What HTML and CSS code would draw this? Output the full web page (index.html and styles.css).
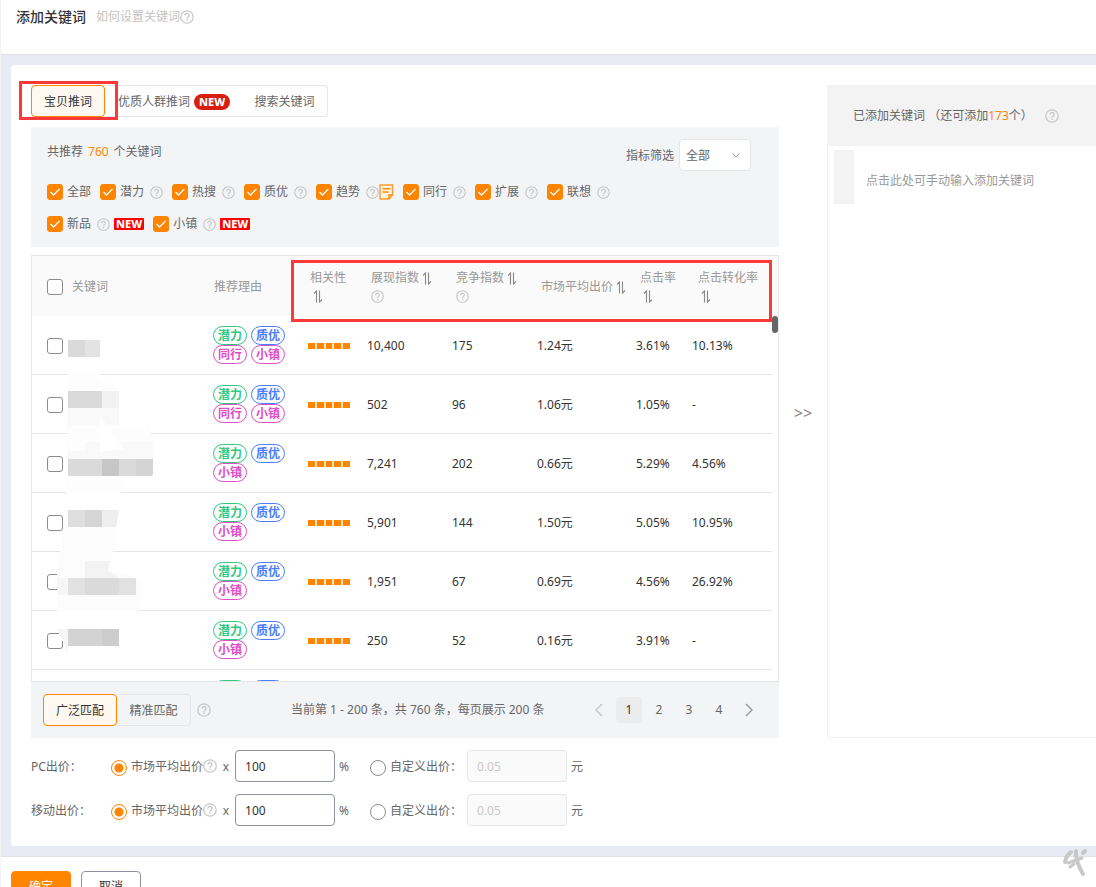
FILE: index.html
```html
<!DOCTYPE html>
<html lang="zh-CN">
<head>
<meta charset="utf-8">
<meta name="viewport" content="width=device-width, initial-scale=1">
<title>添加关键词</title>
<link rel="stylesheet" href="styles.css">
</head>
<body>
<svg class="defs" aria-hidden="true">
  <symbol id="help" viewBox="0 0 14 14">
    <circle cx="7" cy="7" r="6.2" fill="none" stroke="currentColor" stroke-width="1.3"/>
    <path d="M5 5.6a2 2 0 1 1 3.2 1.5c-.8.5-1.2.8-1.2 1.6" fill="none" stroke="currentColor" stroke-width="1.3"/>
    <rect x="6.3" y="9.5" width="1.4" height="1.4" fill="currentColor"/>
  </symbol>
  <symbol id="sort" viewBox="0 0 12 13">
    <path d="M4.5 12.5V1L2 3.5M7.5.5V12L10 9.5" fill="none" stroke="currentColor" stroke-width="1.1"/>
  </symbol>
  <symbol id="note" viewBox="0 0 15 16">
    <path d="M1 1h12.5v10L10 15H1z" fill="#fff4e6" stroke="#ff9a2e" stroke-width="1.4" stroke-linejoin="round"/>
    <path d="M3.5 4.8h8M3.5 8h6M10 15v-4h3.5" fill="none" stroke="#ff8a00" stroke-width="1.4"/>
  </symbol>
  <symbol id="prev" viewBox="0 0 8 14"><path d="M7 1L1 7l6 6" fill="none" stroke="currentColor" stroke-width="1.4"/></symbol>
  <symbol id="next" viewBox="0 0 8 14"><path d="M1 1l6 6-6 6" fill="none" stroke="currentColor" stroke-width="1.4"/></symbol>
</svg>

<header class="page-head">
  <h1>添加关键词</h1>
  <a class="how" href="#">如何设置关键词<svg class="help big"><use href="#help"/></svg></a>
</header>

<main class="stage">
  <div class="card">
    <section class="left">
      <nav class="tabs">
        <button class="tab active" type="button">宝贝推词</button>
        <button class="tab crowd" type="button">优质人群推词<span class="new-pill">NEW</span></button>
        <button class="tab search" type="button">搜索关键词</button>
        <span class="mark mark-tab"></span>
      </nav>

      <div class="filter-box">
        <div class="filter-top">
          <p>共推荐<b class="num total">760</b>个关键词</p>
          <div class="metric">
            <label for="metric">指标筛选</label>
            <select id="metric"><option>全部</option></select>
          </div>
        </div>
        <div class="filters">
          <div class="filter"><label><input type="checkbox" checked>全部</label></div>
          <div class="filter"><label><input type="checkbox" checked>潜力</label><svg class="help"><use href="#help"/></svg></div>
          <div class="filter"><label><input type="checkbox" checked>热搜</label><svg class="help"><use href="#help"/></svg></div>
          <div class="filter"><label><input type="checkbox" checked>质优</label><svg class="help"><use href="#help"/></svg></div>
          <div class="filter"><label><input type="checkbox" checked>趋势</label><svg class="help"><use href="#help"/></svg><svg class="note"><use href="#note"/></svg></div>
          <div class="filter"><label><input type="checkbox" checked>同行</label><svg class="help"><use href="#help"/></svg></div>
          <div class="filter"><label><input type="checkbox" checked>扩展</label><svg class="help"><use href="#help"/></svg></div>
          <div class="filter"><label><input type="checkbox" checked>联想</label><svg class="help"><use href="#help"/></svg></div>
          <div class="filter"><label><input type="checkbox" checked>新品</label><svg class="help"><use href="#help"/></svg><span class="new-tag">NEW</span></div>
          <div class="filter"><label><input type="checkbox" checked>小镇</label><svg class="help"><use href="#help"/></svg><span class="new-tag">NEW</span></div>
        </div>
      </div>

      <div class="table-wrap">
        <table>
          <colgroup>
            <col class="c-check"><col class="c-word"><col class="c-reason"><col class="c-rel"><col class="c-index"><col class="c-index"><col class="c-price"><col class="c-ctr"><col class="c-cvr"><col class="c-gutter">
          </colgroup>
          <thead>
            <tr>
              <th class="check"><input type="checkbox" aria-label="全选"></th>
              <th class="near">关键词</th>
              <th class="near">推荐理由</th>
              <th class="near-rel">相关性<br><svg class="sort"><use href="#sort"/></svg></th>
              <th>展现指数<svg class="sort"><use href="#sort"/></svg><br><svg class="help"><use href="#help"/></svg></th>
              <th>竞争指数<svg class="sort"><use href="#sort"/></svg><br><svg class="help"><use href="#help"/></svg></th>
              <th>市场平均出价<svg class="sort"><use href="#sort"/></svg></th>
              <th>点击率<br><svg class="sort"><use href="#sort"/></svg></th>
              <th class="far">点击转化率<br><svg class="sort"><use href="#sort"/></svg></th>
              <th></th>
            </tr>
          </thead>
          <tbody>
            <tr><td class="check"><input type="checkbox" aria-label="选择第1行"></td><td></td><td><div class="tags"><span class="tag green">潜力</span><span class="tag blue">质优</span><span class="tag pink">同行</span><span class="tag pink">小镇</span></div></td><td><div class="bars"><i></i><i></i><i></i><i></i><i></i></div></td><td>10,400</td><td>175</td><td>1.24元</td><td>3.61%</td><td>10.13%</td><td class="gutter"></td></tr>
            <tr><td class="check"><input type="checkbox" aria-label="选择第2行"></td><td></td><td><div class="tags"><span class="tag green">潜力</span><span class="tag blue">质优</span><span class="tag pink">同行</span><span class="tag pink">小镇</span></div></td><td><div class="bars"><i></i><i></i><i></i><i></i><i></i></div></td><td>502</td><td>96</td><td>1.06元</td><td>1.05%</td><td>-</td><td class="gutter"></td></tr>
            <tr><td class="check"><input type="checkbox" aria-label="选择第3行"></td><td></td><td><div class="tags"><span class="tag green">潜力</span><span class="tag blue">质优</span><span class="tag pink">小镇</span></div></td><td><div class="bars"><i></i><i></i><i></i><i></i><i></i></div></td><td>7,241</td><td>202</td><td>0.66元</td><td>5.29%</td><td>4.56%</td><td class="gutter"></td></tr>
            <tr><td class="check"><input type="checkbox" aria-label="选择第4行"></td><td></td><td><div class="tags"><span class="tag green">潜力</span><span class="tag blue">质优</span><span class="tag pink">小镇</span></div></td><td><div class="bars"><i></i><i></i><i></i><i></i><i></i></div></td><td>5,901</td><td>144</td><td>1.50元</td><td>5.05%</td><td>10.95%</td><td class="gutter"></td></tr>
            <tr><td class="check"><input type="checkbox" aria-label="选择第5行"></td><td></td><td><div class="tags"><span class="tag green">潜力</span><span class="tag blue">质优</span><span class="tag pink">小镇</span></div></td><td><div class="bars"><i></i><i></i><i></i><i></i><i></i></div></td><td>1,951</td><td>67</td><td>0.69元</td><td>4.56%</td><td>26.92%</td><td class="gutter"></td></tr>
            <tr><td class="check"><input type="checkbox" aria-label="选择第6行"></td><td></td><td><div class="tags"><span class="tag green">潜力</span><span class="tag blue">质优</span><span class="tag pink">小镇</span></div></td><td><div class="bars"><i></i><i></i><i></i><i></i><i></i></div></td><td>250</td><td>52</td><td>0.16元</td><td>3.91%</td><td>-</td><td class="gutter"></td></tr>
            <tr><td></td><td></td><td><div class="tags"><span class="tag green"></span><span class="tag blue"></span></div></td><td></td><td></td><td></td><td></td><td></td><td></td><td class="gutter"></td></tr>
          </tbody>
        </table>
        <svg class="mosaic" viewBox="32 256 160 425" aria-hidden="true" shape-rendering="crispEdges">
          <path fill="#fdfdfd" d="M68 373h32v9h13l6 9v36h30l4 15v34l-32 3v14H67V391z"/>
          <path fill="#f9f9f9" d="M68 408h51v17H68zM85 442h68v17H68v-8h17z"/>
          <path fill="#fff" d="M100 416l23 33-23 3z"/>
          <path fill="#dadada" d="M68 340h17v17H68zM68 391h34v17H68zM68 459h34v17H68zM119 459h17v17h-17z"/>
          <path fill="#e3e3e3" d="M85 340h15v17H85z"/>
          <path fill="#f2f2f2" d="M102 391h17v17h-17z"/>
          <path fill="#c6c6c6" d="M102 459h17v17h-17z"/>
          <path fill="#d4d4d4" d="M136 459h17v15l-2 2h-15z"/>
          <path fill="#fcfcfc" d="M65 510h54l-6 41-4 19 27 8h5l-2 33H57v-46l5-20z"/>
          <path fill="#dedede" d="M68 510h17v17H68z"/>
          <path fill="#d5d5d5" d="M85 510h17v17H85z"/>
          <path fill="#eee" d="M102 510h17l-3 17h-14z"/>
          <path fill="#f3f3f3" d="M85 561h25l-2 10 12 7H85z"/>
          <path fill="#f6f6f6" d="M57 578h11v17H57zM57 629h11v24z"/>
          <path fill="#e1e1e1" d="M68 578h17v17H68zM119 578h17v17h-17z"/>
          <path fill="#dadada" d="M85 578h34v17H85z"/>
          <path fill="#d3d3d3" d="M68 629h34v17H68z"/>
          <path fill="#cdcdcd" d="M102 629h17v17h-17z"/>
        </svg>
        <span class="mark mark-head"></span>
        <span class="thumb"></span>
      </div>

      <div class="table-foot">
        <div class="match">
          <button class="tab active" type="button">广泛匹配</button><button class="tab exact" type="button">精准匹配</button>
        </div>
        <svg class="help big"><use href="#help"/></svg>
        <p class="range">当前第 1 - 200 条，共 760 条，每页展示 200 条</p>
        <nav class="pages" aria-label="分页">
          <button class="page prev" type="button" aria-label="上一页"><svg><use href="#prev"/></svg></button>
          <button class="page on" type="button">1</button>
          <button class="page" type="button">2</button>
          <button class="page" type="button">3</button>
          <button class="page" type="button">4</button>
          <button class="page next" type="button" aria-label="下一页"><svg><use href="#next"/></svg></button>
        </nav>
      </div>

      <div class="bids">
        <div class="bid">
          <span class="bid-name">PC出价<span class="colon">：</span></span>
          <label class="avg"><input type="radio" name="pc" checked>市场平均出价</label><svg class="help big"><use href="#help"/></svg>
          <span class="times">x</span>
          <input class="field" type="text" value="100" aria-label="PC出价比例"><span class="unit percent">%</span>
          <label class="own"><input type="radio" name="pc"><span>自定义出价<span class="colon">：</span></span></label>
          <input class="field" type="text" value="0.05" disabled aria-label="PC自定义出价"><span class="unit">元</span>
        </div>
        <div class="bid">
          <span class="bid-name">移动出价<span class="colon">：</span></span>
          <label class="avg"><input type="radio" name="mobile" checked>市场平均出价</label><svg class="help big"><use href="#help"/></svg>
          <span class="times">x</span>
          <input class="field" type="text" value="100" aria-label="移动出价比例"><span class="unit percent">%</span>
          <label class="own"><input type="radio" name="mobile"><span>自定义出价<span class="colon">：</span></span></label>
          <input class="field" type="text" value="0.05" disabled aria-label="移动自定义出价"><span class="unit">元</span>
        </div>
      </div>
    </section>

    <button class="move" type="button">&gt;&gt;</button>

    <section class="right">
      <div class="right-head">
        <h2>已添加关键词 <span class="colon">（</span>还可添加<b class="num">173</b>个<span class="colon">）</span></h2>
        <svg class="help big"><use href="#help"/></svg>
      </div>
      <div class="entry">
        <span class="line-no"></span>
        <p>点击此处可手动输入添加关键词</p>
      </div>
    </section>
  </div>
</main>

<footer class="actions">
  <button class="btn primary" type="button">确定</button>
  <button class="btn" type="button">取消</button>
</footer>

<svg class="brand" viewBox="0 0 26 30" aria-hidden="true">
  <path d="M3 14C4 9 6 6 9 4" stroke-width="4"/>
  <path d="M6 15L20 10" stroke-width="3"/>
  <path d="M14 3c-1 8 3 16 7 23" stroke-width="4"/>
  <path d="M21 5l2-2" stroke-width="4"/>
  <path d="M8 19l4-3" stroke-width="3"/>
</svg>
</body>
</html>
```
FILE: styles.css
```css
* { box-sizing: border-box; }

html { overflow: hidden; }

body {
  margin: 0;
  border-left: 1px solid #f3f3f3;
  background: #fff;
  color: #666;
  font: 12px/18px "Noto Sans", "Noto Sans CJK SC", sans-serif;
}

h1, h2, p { margin: 0; font-size: 12px; font-weight: 400; }
button, input, select { margin: 0; font: inherit; color: inherit; }
button { padding: 0; border: 0; background: none; white-space: nowrap; }
svg { flex: none; }

.defs { position: absolute; width: 0; height: 0; }
.help { width: 13px; height: 13px; color: #c8c8c8; }
.help.big { width: 14px; height: 14px; }
.num { color: #ff8400; font-weight: 400; }
.total { margin: 0 5px; }
.colon { font-family: "Noto Sans CJK TC", sans-serif; line-height: 1; }

.page-head {
  display: flex;
  align-items: flex-start;
  gap: 10px;
  height: 55px;
  padding: 8px 15px;
  border-bottom: 1px solid #dfe1e6;
}
.page-head h1 { color: #333; font-size: 14px; font-weight: 500; }
.how { display: flex; align-items: center; color: #c4c4c4; text-decoration: none; }

.stage { padding: 10px 0 10px 10px; background: #e8ebf3; }
.card {
  display: grid;
  grid-template-columns: minmax(0, 748fr) 48px minmax(0, 269fr);
  padding: 20px 0 20px 20px;
  border-radius: 4px 0 0 4px;
  background: #fff;
}

.tabs { position: relative; display: flex; width: 297px; height: 32px; }
.tab {
  height: 32px;
  padding-top: 1px;
  border: 1px solid #e6e6e6;
  border-left: 0;
}
.tab.active {
  width: 74px;
  border: 1px solid #ff8400;
  border-radius: 4px;
  background: #fff8f0;
  color: #333;
}
.crowd { display: flex; align-items: center; gap: 4px; padding-left: 13px; border-right: 0; }
.search { flex: 1; padding-left: 12px; border-radius: 0 4px 4px 0; }
.new-pill {
  padding: 0 5px;
  border-radius: 8px;
  background: #d81e0f;
  color: #fff;
  font-size: 11px;
  font-weight: 800;
  line-height: 16px;
}
.mark { position: absolute; border: 3px solid #fb3939; pointer-events: none; }
.mark-tab { top: -4px; left: -12px; width: 99px; height: 39px; }

.filter-box { height: 120px; margin-top: 10px; padding: 12px 16px 0; background: #f3f4f6; }
.filter-top { display: flex; justify-content: space-between; height: 37px; padding-right: 12px; }
.filter-top p { padding-top: 4px; }
.metric { display: flex; align-items: center; gap: 5px; height: 32px; }
.metric label { padding-top: 2px; }
select {
  width: 72px;
  height: 32px;
  padding: 2px 6px 0;
  border: 1px solid #e6e6e6;
  border-radius: 4px;
  appearance: none;
  background: #fff url("data:image/svg+xml,%3Csvg xmlns='http://www.w3.org/2000/svg' width='8' height='5'%3E%3Cpath d='M.5.5L4 4 7.5.5' fill='none' stroke='%23999'/%3E%3C/svg%3E") no-repeat right 10px center;
}
.filters { display: flex; flex-wrap: wrap; column-gap: 9px; max-width: 600px; }
.filter { display: flex; align-items: center; height: 32px; }
.filter label { display: flex; align-items: center; gap: 4px; }
.filter label + .help { margin-left: 6px; }
.note { width: 15px; height: 16px; }
.new-tag {
  margin-left: 4px;
  padding: 0 2px;
  border-radius: 1px;
  background: #f00;
  color: #fff;
  font-size: 11px;
  font-weight: 800;
  line-height: 12px;
}

input[type="checkbox"] {
  display: block;
  position: relative;
  width: 16px;
  height: 16px;
  border: 1px solid #8c8c8c;
  border-radius: 3px;
  appearance: none;
  background: #fff;
}
input[type="checkbox"]:checked {
  border-color: #ff8400;
  background: #ff8400 url("data:image/svg+xml,%3Csvg xmlns='http://www.w3.org/2000/svg' width='10' height='8'%3E%3Cpath d='M.5 4L3.5 7 9.5 1' fill='none' stroke='%23fff' stroke-width='1.3'/%3E%3C/svg%3E") no-repeat center;
}
input[type="radio"] {
  width: 16px;
  height: 16px;
  border: 1px solid #8c8c8c;
  border-radius: 50%;
  appearance: none;
  background: #fff;
}
input[type="radio"]:checked {
  border-color: #ff8400;
  background: radial-gradient(circle, #ff8400 4px, #fff 5px);
}

.table-wrap {
  position: relative;
  height: 427px;
  margin-top: 8px;
  border: 1px solid #e6e6e6;
  overflow: hidden;
}
table { width: 100%; border-collapse: separate; border-spacing: 0; table-layout: fixed; }
.c-check { width: 35px; }
.c-word { width: 142px; }
.c-reason { width: 95px; }
.c-rel { width: 59px; }
.c-index { width: 85px; }
.c-price { width: 99px; }
.c-ctr { width: 56px; }
.c-cvr { width: 84px; }
.c-gutter { width: 6px; }
th {
  height: 60px;
  padding: 2px 0 0 8px;
  background: #fafafa;
  color: #999;
  font-weight: 400;
  text-align: left;
  white-space: nowrap;
}
th.near { padding-left: 5px; }
th.near-rel { padding-left: 6px; }
th.far { padding-left: 10px; }
th .help { vertical-align: middle; }
th.check, td.check { padding-left: 15px; }
td { height: 59px; padding: 2px 0 0 4px; border-bottom: 1px solid #e6e6e6; color: #333; }
td.gutter { padding: 0; border: 0; }
.sort { width: 12px; height: 13px; margin-left: 2px; color: #888; vertical-align: middle; }
.tags { display: flex; flex-wrap: wrap; align-content: flex-start; column-gap: 4px; width: 76px; height: 38px; margin-bottom: 2px; }
.tag {
  width: 34px;
  height: 19px;
  border: 1px solid;
  border-radius: 10px;
  font-weight: 700;
  line-height: 17px;
  text-align: center;
}
.green { color: #2fc97f; }
.blue { color: #4a7dff; }
.pink { color: #e04fc6; }
.bars { display: flex; gap: 2px; width: 42px; height: 6px; background: #fbe3c4; }
.bars i { flex: 1; background: #ff8400; }
.mosaic { position: absolute; top: 0; left: 0; width: 160px; height: 425px; }
.mark-head { top: 4px; right: 6px; left: 259px; height: 62px; }
.thumb { position: absolute; top: 60px; right: 0; width: 6px; height: 17px; border-radius: 3px; background: #666; }

.table-foot { display: flex; align-items: center; height: 56px; padding: 0 17px 0 12px; background: #f3f4f6; }
.match { display: flex; margin-right: 6px; }
.exact { width: 74px; border-radius: 0 4px 4px 0; }
.range { margin-left: 80px; white-space: nowrap; }
.pages { display: flex; gap: 4px; margin-left: auto; }
.page { display: grid; place-items: center; width: 26px; height: 26px; border-radius: 4px; }
.page.on { background: #ececec; color: #333; }
.page svg { width: 8px; height: 14px; color: #999; }
.page.prev svg { color: #c4c4c4; }

.bids { display: grid; gap: 12px; padding-top: 12px; }
.bid { display: flex; align-items: center; height: 32px; white-space: nowrap; }
.bid-name { width: 80px; padding-top: 2px; }
.bid label { display: flex; align-items: center; gap: 4px; padding-top: 2px; }
.bid input[type="radio"] { margin-top: 2px; }
.times { width: 18px; padding-top: 2px; text-align: center; }
.field {
  width: 100px;
  height: 32px;
  padding: 0 9px;
  border: 1px solid #8f92a3;
  border-radius: 4px;
  background: #fff;
  color: #333;
}
.field:disabled { border-color: #e6e6e6; background: #fafafa; color: #c8c8c8; }
.unit { margin-left: 4px; padding-top: 2px; }
.percent { width: 31px; }
.own { width: 97px; }

.move { padding-bottom: 86px; color: #888; font-size: 16px; }

.right { border: 1px solid #f3f3f3; border-width: 0 0 1px 1px; height: 653px; }
.right-head { display: flex; align-items: center; gap: 12px; height: 61px; padding-left: 25px; background: #f3f3f3; white-space: nowrap; }
.entry { display: flex; align-items: center; gap: 12px; padding: 4px 0 0 6px; color: #999; white-space: nowrap; }
.entry p { padding-top: 8px; }
.line-no { width: 20px; height: 54px; background: #f3f3f3; }

.actions { display: flex; gap: 10px; padding: 14px 10px; border-top: 1px solid #dfe1e6; }
.btn { width: 60px; height: 32px; border: 1px solid #8f92a3; border-radius: 4px; color: #333; }
.btn.primary { border-color: #ff8400; background: #ff8400; color: #fff; }

.brand { position: fixed; right: 8px; bottom: 9px; width: 26px; height: 30px; fill: none; stroke: #c8c8c8; stroke-linecap: round; }
```
